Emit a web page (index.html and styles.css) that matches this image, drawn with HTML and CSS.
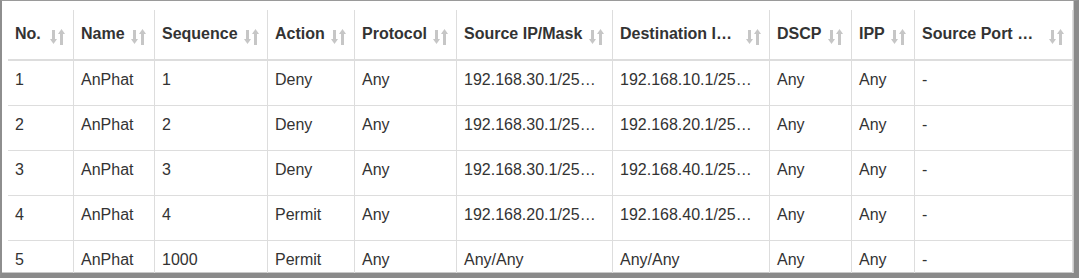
FILE: index.html
```html
<!DOCTYPE html>
<html>
<head>
<meta charset="utf-8">
<link rel="stylesheet" href="styles.css">
</head>
<body>
<div class="frame">
  <table class="acl">
    <colgroup>
      <col style="width:65px"><col style="width:81px"><col style="width:113px"><col style="width:87px"><col style="width:102px">
      <col style="width:156px"><col style="width:157px"><col style="width:82px"><col style="width:63px"><col style="width:159px">
    </colgroup>
    <thead>
      <tr>
        <th><div class="th-in"><span class="th-text">No.</span><svg class="sort" viewBox="0 0 15 16"><rect x="2" y="1" width="3" height="10"/><polygon points="0,10 7,10 3.5,15"/><polygon points="8,5 15,5 11.5,0"/><rect x="10" y="5" width="3" height="11"/></svg></div></th>
        <th><div class="th-in"><span class="th-text">Name</span><svg class="sort" viewBox="0 0 15 16"><rect x="2" y="1" width="3" height="10"/><polygon points="0,10 7,10 3.5,15"/><polygon points="8,5 15,5 11.5,0"/><rect x="10" y="5" width="3" height="11"/></svg></div></th>
        <th><div class="th-in"><span class="th-text">Sequence</span><svg class="sort" viewBox="0 0 15 16"><rect x="2" y="1" width="3" height="10"/><polygon points="0,10 7,10 3.5,15"/><polygon points="8,5 15,5 11.5,0"/><rect x="10" y="5" width="3" height="11"/></svg></div></th>
        <th><div class="th-in"><span class="th-text">Action</span><svg class="sort" viewBox="0 0 15 16"><rect x="2" y="1" width="3" height="10"/><polygon points="0,10 7,10 3.5,15"/><polygon points="8,5 15,5 11.5,0"/><rect x="10" y="5" width="3" height="11"/></svg></div></th>
        <th><div class="th-in"><span class="th-text">Protocol</span><svg class="sort" viewBox="0 0 15 16"><rect x="2" y="1" width="3" height="10"/><polygon points="0,10 7,10 3.5,15"/><polygon points="8,5 15,5 11.5,0"/><rect x="10" y="5" width="3" height="11"/></svg></div></th>
        <th><div class="th-in"><span class="th-text">Source IP/Mask</span><svg class="sort" viewBox="0 0 15 16"><rect x="2" y="1" width="3" height="10"/><polygon points="0,10 7,10 3.5,15"/><polygon points="8,5 15,5 11.5,0"/><rect x="10" y="5" width="3" height="11"/></svg></div></th>
        <th><div class="th-in"><span class="th-text">Destination I…</span><svg class="sort" viewBox="0 0 15 16"><rect x="2" y="1" width="3" height="10"/><polygon points="0,10 7,10 3.5,15"/><polygon points="8,5 15,5 11.5,0"/><rect x="10" y="5" width="3" height="11"/></svg></div></th>
        <th><div class="th-in"><span class="th-text">DSCP</span><svg class="sort" viewBox="0 0 15 16"><rect x="2" y="1" width="3" height="10"/><polygon points="0,10 7,10 3.5,15"/><polygon points="8,5 15,5 11.5,0"/><rect x="10" y="5" width="3" height="11"/></svg></div></th>
        <th><div class="th-in"><span class="th-text">IPP</span><svg class="sort" viewBox="0 0 15 16"><rect x="2" y="1" width="3" height="10"/><polygon points="0,10 7,10 3.5,15"/><polygon points="8,5 15,5 11.5,0"/><rect x="10" y="5" width="3" height="11"/></svg></div></th>
        <th><div class="th-in"><span class="th-text">Source Port …</span><svg class="sort" viewBox="0 0 15 16"><rect x="2" y="1" width="3" height="10"/><polygon points="0,10 7,10 3.5,15"/><polygon points="8,5 15,5 11.5,0"/><rect x="10" y="5" width="3" height="11"/></svg></div></th>
      </tr>
    </thead>
    <tbody>
      <tr><td>1</td><td>AnPhat</td><td>1</td><td>Deny</td><td>Any</td><td>192.168.30.1/25…</td><td>192.168.10.1/25…</td><td>Any</td><td>Any</td><td>-</td></tr>
      <tr><td>2</td><td>AnPhat</td><td>2</td><td>Deny</td><td>Any</td><td>192.168.30.1/25…</td><td>192.168.20.1/25…</td><td>Any</td><td>Any</td><td>-</td></tr>
      <tr><td>3</td><td>AnPhat</td><td>3</td><td>Deny</td><td>Any</td><td>192.168.30.1/25…</td><td>192.168.40.1/25…</td><td>Any</td><td>Any</td><td>-</td></tr>
      <tr><td>4</td><td>AnPhat</td><td>4</td><td>Permit</td><td>Any</td><td>192.168.20.1/25…</td><td>192.168.40.1/25…</td><td>Any</td><td>Any</td><td>-</td></tr>
      <tr><td>5</td><td>AnPhat</td><td>1000</td><td>Permit</td><td>Any</td><td>Any/Any</td><td>Any/Any</td><td>Any</td><td>Any</td><td>-</td></tr>
    </tbody>
  </table>
</div>
</body>
</html>
```
FILE: styles.css
```css
html, body {
  margin: 0;
  padding: 0;
  background: #fff;
}

.frame {
  box-sizing: border-box;
  width: 1079px;
  height: 278px;
  overflow: hidden;
  border-top: 1px solid #9a9a9a;
  border-left: 2px solid #8e8e8e;
  border-right: 5px solid #8a8a8a;
  border-bottom: 5px solid #8a8a8a;
  box-shadow: inset -1px -1px 0 #c9c9c9;
  padding: 9px 0 0 6px;
  font-family: "Liberation Sans", Arial, sans-serif;
  font-size: 16px;
  color: #333;
}

.acl {
  table-layout: fixed;
  border-collapse: separate;
  border-spacing: 0;
  width: 1065px;
}

.acl th,
.acl td {
  box-sizing: border-box;
  border-left: 1px solid #ddd;
  line-height: 20px;
  text-align: left;
  white-space: nowrap;
  overflow: hidden;
}

.acl th:first-child,
.acl td:first-child {
  border-left: none;
}

.acl th:last-child,
.acl td:last-child {
  border-right: 1px solid #ddd;
}

.acl th {
  font-weight: bold;
  padding: 14px 8px 14px 7px;
  border-bottom: 2px solid #ddd;
  vertical-align: top;
}

.th-in {
  display: flex;
  align-items: flex-start;
  gap: 5px;
}

.th-text {
  flex: 1;
  min-width: 0;
  overflow: hidden;
  text-overflow: ellipsis;
  white-space: nowrap;
}

.sort {
  flex: none;
  width: 15px;
  height: 16px;
  margin-top: 5px;
  fill: #c6c6c6;
}

.acl td {
  padding: 9px 9px 15px 7px;
  border-bottom: 1px solid #ddd;
  vertical-align: top;
  text-overflow: ellipsis;
}
```
